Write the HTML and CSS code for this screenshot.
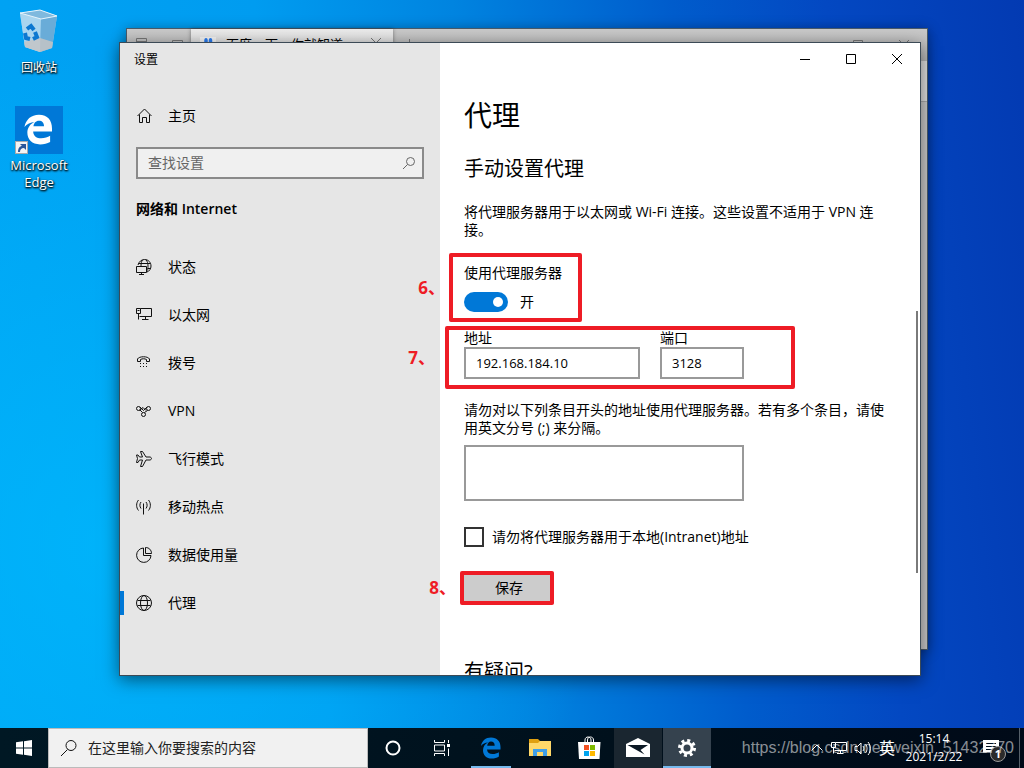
FILE: index.html
```html
<!DOCTYPE html>
<html lang="zh-CN">
<head>
    <meta charset="UTF-8">
    <meta name="viewport" content="width=device-width, initial-scale=1.0">
    <title>设置 - 代理</title>
    <link rel="stylesheet" href="styles.css">
</head>
<body>
    <div class="desktop">
        <!-- Desktop shortcuts -->
        <div class="shortcuts">
            <a class="shortcut" href="#">
                <svg width="48" height="48" viewBox="0 0 48 48">
                    <path d="M5 5 L25 2 L42 8 L37 40 L25 44 L10 39 Z" fill="#8cc9ee"/>
                    <path d="M5 5 L26 11 L25 44 L10 39 Z" fill="#a9d5ef"/>
                    <path d="M26 11 L42 8 L37 40 L25 44 Z" fill="#69acd8"/>
                    <path d="M9 34 L25 30 L38 34 L37 40 L25 44 L10 39 Z" fill="#c4c4c6" opacity=".85"/>
                    <path d="M5 5 L25 2 L42 8 L26 11 Z" fill="#7fb9de" stroke="#e6f4fc" stroke-width="1"/>
                    <path d="M12 21 l4 -3 3 4 M20 24 l2 5 -4 2 M15 31 l-4 -1 -1 -5" fill="none" stroke="#0c78d0" stroke-width="4"/>
                </svg>
                <span>回收站</span>
            </a>
            <a class="shortcut edge" href="#">
                <svg width="48" height="48" viewBox="0 0 48 48">
                    <rect width="48" height="48" fill="#0078d7"/>
                    <path transform="translate(8 8) scale(1.450)" d="M1 9 C2 4 5.500 .6 11 .6 C17 .6 20 4.500 20 10 V12 H7 C7.200 15.200 9.500 16.700 12.500 16.700 C15 16.700 17 16 18.700 15 V19.300 C16.700 20.400 14.500 21 11.800 21 C6.200 21 3 17.500 3 13 C3 9.500 5 6.700 8 5.500 C5.200 5.700 2.600 6.800 1 9 Z M7.200 8.500 H14.500 C14.500 6 13.200 4.600 11 4.600 C8.800 4.600 7.500 6.200 7.200 8.500 Z" fill="#fff" fill-rule="evenodd"/>
                    <rect x="0.500" y="35.500" width="12" height="12" fill="#f4f4f4" stroke="#aaa"/>
                    <path d="M3 46 C3 42 5 40 7 40 L5 38 H11 V44 L9 42 C6 42 5 44 5 46 Z" fill="#2b579a"/>
                </svg>
                <span>Microsoft Edge</span>
            </a>
        </div>

        <!-- Browser window behind -->
        <div class="browser">
            <div class="browser-tabs">
                <div class="browser-tools">
                    <svg width="14" height="14" viewBox="0 0 14 14"><path d="M1.500 2.500 h10 v10 h-10 Z M1.500 5.500 h10 M3 7.500 h7" /></svg>
                    <svg width="14" height="14" viewBox="0 0 14 14"><path d="M1.500 4.500 h10 v9 h-10 Z" /></svg>
                </div>
                <div class="browser-tab">
                    <svg width="16" height="16" viewBox="0 0 16 16"><rect width="16" height="16" fill="#f4f4f4"/><g fill="#2a7cf0"><ellipse cx="6" cy="4" rx="1.800" ry="3"/><ellipse cx="10.500" cy="4" rx="1.800" ry="3"/><ellipse cx="2.500" cy="7.500" rx="1.600" ry="2.300"/><ellipse cx="13.500" cy="7.500" rx="1.600" ry="2.300"/><path d="M8 7 L13 13 H3 Z"/></g></svg>
                    <span>百度一下，你就知道</span>
                    <svg width="12" height="12" viewBox="0 0 12 12"><path d="M1 1 L11 11 M11 1 L1 11" fill="none" stroke="#555"/></svg>
                </div>
                <svg class="browser-add" width="12" height="12" viewBox="0 0 12 12"><path d="M6.500 1 V12 M1 6.500 H12"/></svg>
                <div class="browser-controls">
                    <svg width="10" height="10" viewBox="0 0 10 10"><path d="M.5 .5 h9 v9 h-9 Z"/></svg>
                    <svg width="10" height="10" viewBox="0 0 10 10"><path d="M0 0 L10 10 M10 0 L0 10"/></svg>
                </div>
            </div>
            <div class="browser-bar"></div>
        </div>

        <!-- Settings window -->
        <div class="settings">
            <aside class="sidebar">
                <div class="window-title">设置</div>
                <a class="nav-item home" href="#">
                    <svg width="16" height="16" viewBox="0 0 16 16"><path d="M1.500 8 L8.500 1 L15.500 8 M3.500 6.500 V14.500 H6.500 V9.500 H10.500 V14.500 H13.500 V6.500"/></svg>
                    <span>主页</span>
                </a>
                <div class="search">
                    <input type="text" placeholder="查找设置" aria-label="查找设置">
                    <svg width="14" height="14" viewBox="0 0 14 14"><circle cx="8.500" cy="5.500" r="4"/><path d="M5.500 8.500 L1 13"/></svg>
                </div>
                <h3>网络和 Internet</h3>
                <nav>
                    <a class="nav-item" href="#">
                        <svg width="16" height="16" viewBox="0 0 16 16"><path d="M2 6 C3 2.500 5.500 .5 8.500 .5 C12.500 .5 15 3.500 15 7 C15 10 13.500 12 11 13 M6.500 1 C5.500 2.500 5 4 5 7 M10 1 C11.500 2.500 12 4.500 12 7 C12 9 11.800 10.500 11.500 11.500 M2.500 4.500 H14.500 M11.500 9.500 H14.500 M.5 7.500 H10.500 V13.500 H.5 Z M5.500 13.500 V15.500 M3 15.500 H8"/></svg>
                        <span>状态</span>
                    </a>
                    <a class="nav-item" href="#">
                        <svg width="16" height="16" viewBox="0 0 16 16"><path d="M4.500 1.500 H15.500 V9.500 H3.500 M9.500 9.500 V12.500 M6 12.500 H12.500 M.5 1.500 H4.500 V6.500 H.5 Z M2.500 6.500 V12.500 M1.500 3.500 H3.500"/></svg>
                        <span>以太网</span>
                    </a>
                    <a class="nav-item" href="#">
                        <svg width="16" height="16" viewBox="0 0 16 16"><path d="M1.500 6.500 V4 C3 1 12 1 13.500 4 V6.500 H10.500 V4.500 C8.500 3.500 6.500 3.500 4.500 4.500 V6.500 Z"/><path d="M4 8.500 h7 M4 11.500 h7" stroke-dasharray="1 2"/></svg>
                        <span>拨号</span>
                    </a>
                    <a class="nav-item" href="#">
                        <svg width="16" height="16" viewBox="0 0 16 16"><circle cx="2.500" cy="5.500" r="2"/><circle cx="12.500" cy="5.500" r="2"/><circle cx="7.500" cy="11.500" r="2"/><path d="M4 4 L7.500 7.500 L11 4 M3.500 7.500 L7 4.500 L10 7.500 M11.500 7.500 L8.500 9.500 M6.500 9.500 L4 7"/></svg>
                        <span>VPN</span>
                    </a>
                    <a class="nav-item" href="#">
                        <svg width="16" height="16" viewBox="0 0 16 16"><path d="M4.500 .5 H6.500 L10 6 H14 C16 6.500 16 8.500 14 9 H10 L6.500 15.500 H4.500 L6.500 9 H3.500 L2 11.500 H.5 L1.500 7.500 L.5 4 H2 L3.500 6 H6.500 Z"/></svg>
                        <span>飞行模式</span>
                    </a>
                    <a class="nav-item" href="#">
                        <svg width="16" height="16" viewBox="0 0 16 16"><path d="M7.500 4.500 V15.500 M5 3 C3.500 5 3.500 7.500 5 9.500 M10 3 C11.500 5 11.500 7.500 10 9.500 M2.500 1 C0 4 0 8.500 2.500 11.500 M12.500 1 C15 4 15 8.500 12.500 11.500"/></svg>
                        <span>移动热点</span>
                    </a>
                    <a class="nav-item" href="#">
                        <svg width="16" height="16" viewBox="0 0 16 16"><path d="M7.500 1 A7.200 7.200 0 1 0 15 8.500 H7.500 Z M9.500 .5 C13 .5 15.500 3 15.500 6.500 H9.500 Z"/></svg>
                        <span>数据使用量</span>
                    </a>
                    <a class="nav-item active" href="#">
                        <svg width="16" height="16" viewBox="0 0 16 16"><circle cx="8" cy="8" r="7.500"/><ellipse cx="8" cy="8" rx="3.500" ry="7.500"/><path d="M1.500 5.500 H14.500 M1.500 10.500 H14.500"/></svg>
                        <span>代理</span>
                    </a>
                </nav>
            </aside>

            <main class="content">
                <div class="window-controls">
                    <button aria-label="最小化"><svg width="10" height="10" viewBox="0 0 10 10"><path d="M0 5.500 H10"/></svg></button>
                    <button aria-label="最大化"><svg width="10" height="10" viewBox="0 0 10 10"><path d="M.5 .5 H9.500 V9.500 H.5 Z"/></svg></button>
                    <button aria-label="关闭"><svg width="10" height="10" viewBox="0 0 10 10"><path d="M0 0 L10 10 M10 0 L0 10"/></svg></button>
                </div>
                <div class="page">
                    <h1>代理</h1>
                    <h2>手动设置代理</h2>
                    <p class="intro">将代理服务器用于以太网或 Wi-Fi 连接。这些设置不适用于 VPN 连接。</p>

                    <div class="group toggle-group">
                        <label for="useProxy">使用代理服务器</label>
                        <div class="toggle-row">
                            <input type="checkbox" id="useProxy" class="toggle" checked>
                            <span>开</span>
                        </div>
                        <div class="mark mark-toggle"><span>6、</span></div>
                    </div>

                    <div class="group address-group">
                        <div class="field address">
                            <label for="address">地址</label>
                            <input type="text" id="address" value="192.168.184.10">
                        </div>
                        <div class="field port">
                            <label for="port">端口</label>
                            <input type="text" id="port" value="3128">
                        </div>
                        <div class="mark mark-address"><span>7、</span></div>
                    </div>

                    <label class="bypass-label" for="bypass">请勿对以下列条目开头的地址使用代理服务器。若有多个条目，请使用英文分号 (;) 来分隔。</label>
                    <textarea id="bypass"></textarea>

                    <div class="check-row">
                        <input type="checkbox" id="local">
                        <label for="local">请勿将代理服务器用于本地(Intranet)地址</label>
                    </div>

                    <div class="group save-group">
                        <button class="save">保存</button>
                        <div class="mark mark-save"><span>8、</span></div>
                    </div>

                    <h2 class="help">有疑问?</h2>
                </div>
                <div class="scrollbar"></div>
            </main>
        </div>
    </div>

    <!-- Taskbar -->
    <footer class="taskbar">
        <button class="start" aria-label="开始">
            <svg width="16" height="16" viewBox="0 0 16 16"><path d="M0 2.300 L7 1.300 V7.500 H0 Z M8 1.200 L16 0 V7.500 H8 Z M0 8.500 H7 V14.700 L0 13.700 Z M8 8.500 H16 V16 L8 14.800 Z" fill="#fff"/></svg>
        </button>
        <div class="task-search">
            <svg width="18" height="18" viewBox="0 0 18 18"><circle cx="11" cy="6.500" r="5"/><path d="M7.500 10.500 L1 17"/></svg>
            <input type="text" placeholder="在这里输入你要搜索的内容" aria-label="搜索">
        </div>
        <div class="tasks">
            <button class="task" aria-label="Cortana">
                <svg width="16" height="16" viewBox="0 0 16 16"><circle cx="8" cy="8" r="6.500" fill="none" stroke="#fff" stroke-width="2"/></svg>
            </button>
            <button class="task" aria-label="任务视图">
                <svg width="16" height="16" viewBox="0 0 16 16"><path d="M.5 0 V2.500 H10.500 V0 M.5 16 V13.500 H10.500 V16 M.5 5 H10.500 V11 H.5 Z M14.500 0 V3 M14.500 8.500 V16" fill="none" stroke="#fff"/><rect x="13" y="4" width="3" height="3" fill="#fff"/></svg>
            </button>
            <button class="task open" aria-label="Edge">
                <svg width="22" height="22" viewBox="0 0 22 22"><path d="M1 9 C2 4 5.500 .6 11 .6 C17 .6 20.500 4.500 20.500 10 V12.500 H7 C7.200 15.500 9.500 17 12.500 17 C15 17 17 16.400 18.900 15.200 V19.500 C16.700 21 14.500 21.600 11.800 21.600 C6.200 21.600 3 18 3 13.300 C3 9.500 5 6.700 8 5.500 C5.200 5.700 2.600 6.800 1 9 Z M7.200 8.800 H14.700 C14.700 6 13.200 4.600 11 4.600 C8.800 4.600 7.500 6.200 7.200 8.800 Z" fill="#0078d7" fill-rule="evenodd"/></svg>
            </button>
            <button class="task" aria-label="文件资源管理器">
                <svg width="22" height="20" viewBox="0 0 22 20"><path d="M0 1 H9 L11 3 H21 V18 H0 Z" fill="#e0a010"/><path d="M0 5 H9 L11 3 H22 V18 H0 Z" fill="#ffd869"/><path d="M4 18 V11 H18 V18 H14 V14 H8 V18 Z" fill="#3f9fe8"/></svg>
            </button>
            <button class="task" aria-label="应用商店">
                <svg width="24" height="24" viewBox="0 0 24 24"><path d="M8 7 V4 C8 0 14 0 14 4 V7 M10.500 7 V4 C10.500 0 16.500 0 16.500 4 V7" fill="none" stroke="#fff"/><path d="M1 6 H23.500 L22.500 23 H2 Z" fill="#fff"/><path d="M7 9 h5 v5 h-5 Z" fill="#f25022"/><path d="M13 9 h5 v5 h-5 Z" fill="#7fba00"/><path d="M7 15 h5 v5 h-5 Z" fill="#00a4ef"/><path d="M13 15 h5 v5 h-5 Z" fill="#ffb900"/></svg>
            </button>
            <button class="task hover" aria-label="邮件">
                <svg width="24" height="20" viewBox="0 0 24 20"><path d="M0 6 L12 0 L24 6 V19 H0 Z" fill="#fff"/><path d="M1.500 7 H22 L14.500 12 L18.500 16.500 Z" fill="#0b1824"/></svg>
            </button>
            <button class="task open current" aria-label="设置">
                <svg width="20" height="20" viewBox="0 0 20 20"><circle cx="10" cy="10" r="5" fill="none" stroke="#fff" stroke-width="3"/><circle cx="10" cy="10" r="7.500" fill="none" stroke="#fff" stroke-width="3" stroke-dasharray="3 2.890"/></svg>
            </button>
        </div>
        <div class="tray">
            <svg width="14" height="16" viewBox="0 0 14 16"><path d="M1.500 10.500 L7 5 L12.500 10.500"/></svg>
            <svg width="16" height="16" viewBox="0 0 16 16"><path d="M4.500 2.500 H15.500 V10.500 H3.500 M9.500 10.500 V13.500 M6 13.500 H12.500 M.5 2.500 H4.500 V7.500 H.5 Z M2.500 7.500 V13.500 M2.500 4.500 H3.500"/></svg>
            <svg width="18" height="16" viewBox="0 0 18 16"><path d="M1 6.500 H3.500 L7 3 V14 L3.500 10.500 H1 Z M9 6 C10 7.500 10 9.500 9 11 M11.500 4 C13.500 6.500 13.500 10.500 11.500 13 M14 2 C17 5.500 17 11.500 14 15"/></svg>
            <span class="ime">英</span>
            <div class="clock">
                <span>15:14</span>
                <span>2021/2/22</span>
            </div>
            <div class="notice">
                <svg width="16" height="16" viewBox="0 0 16 16"><path class="bubble" d="M0 0 H16 V12 H11 V15 L8 12 H0 Z"/><path d="M3 3.500 H13 M3 6.500 H13 M3 9.500 H10" stroke="#001020"/></svg>
                <span class="badge">1</span>
            </div>
            <div class="show-desktop"></div>
        </div>
        <div class="watermark">https://blog.csdn.net/weixin_51432770</div>
    </footer>
</body>
</html>
```

FILE: styles.css
```css
* {
    box-sizing: border-box;
}
body {
    margin: 0;
    height: 100vh;
    display: flex;
    flex-direction: column;
    overflow: hidden;
    font-family: 'Open Sans', 'Noto Sans CJK SC', sans-serif;
    font-size: 14px;
    line-height: 18px;
    color: #000;
}
button, input, textarea {
    font: inherit;
    color: inherit;
}
a {
    color: inherit;
    text-decoration: none;
}
h1, h2, h3, p {
    margin: 0;
    font-weight: normal;
}
svg {
    display: block;
    flex: none;
}

/* Desktop */
.desktop {
    position: relative;
    flex: 1;
    min-height: 0;
    overflow: hidden;
    background:
        radial-gradient(ellipse 500px 500px at 10% 75%, rgba(0, 190, 255, 0.6), rgba(0, 190, 255, 0)),
        linear-gradient(84deg, #00a4f4 0%, #009cf0 30%, #0084e0 48%, #005ccc 68%, #0348c2 82%, #033ab2 100%);
}
.shortcuts {
    display: flex;
    flex-direction: column;
    gap: 30px;
    width: 78px;
    padding-top: 8px;
}
.shortcut {
    display: flex;
    flex-direction: column;
    align-items: center;
    gap: 3px;
    font-size: 12px;
    line-height: 17px;
    color: #fff;
    text-align: center;
    text-shadow: 1px 1px 2px #000, 0 1px 2px #000;
}
.edge {
    font-size: 13px;
}

/* Browser window */
.browser {
    position: absolute;
    top: 28px;
    left: 126px;
    right: 96px;
    bottom: 78px;
    border: 1px solid #4a5a68;
    background: #c8c8c8;
    box-shadow: 0 2px 12px rgba(0, 0, 0, 0.4);
}
.browser-tabs {
    display: flex;
    height: 32px;
    background: linear-gradient(#cacaca, #b4b4b4);
}
.browser-tabs path {
    fill: none;
    stroke: #777;
}
.browser-tools {
    display: flex;
    gap: 22px;
    width: 64px;
    padding: 7px 8px;
}
.browser-tab {
    display: flex;
    gap: 10px;
    width: 202px;
    padding: 8px 11px 0 9px;
    background: linear-gradient(#ececec, #d0d0d0);
    font-size: 13px;
    line-height: 14px;
    box-shadow: 0 0 4px rgba(0, 0, 0, 0.4);
}
.browser-tab span {
    flex: 1;
    white-space: nowrap;
}
.browser-tab g path {
    fill: #2a7cf0;
    stroke: none;
}
.browser-add {
    margin: 9px 10px;
}
.browser-controls {
    display: flex;
    gap: 36px;
    margin-left: auto;
    padding: 11px 18px;
}
.browser-bar {
    height: 41px;
    background: #dedede;
    border-bottom: 1px solid #aaa;
}

/* Settings window */
.settings {
    position: absolute;
    top: 42px;
    left: 119px;
    right: 103px;
    bottom: 52px;
    display: flex;
    border: 1px solid #3c4a56;
    box-shadow: 0 4px 16px rgba(0, 0, 0, 0.5);
    overflow: hidden;
}
.sidebar {
    width: 320px;
    background: #e6e6e6;
}
.window-title {
    padding: 8px 14px 6px;
    font-size: 12px;
}
.nav-item {
    position: relative;
    display: flex;
    align-items: center;
    gap: 16px;
    height: 48px;
    padding: 0 16px;
}
.nav-item svg, .search svg, .task-search svg {
    fill: none;
    stroke: #111;
}
.home {
    margin-top: 17px;
}
.active::before {
    content: "";
    position: absolute;
    left: 0;
    width: 4px;
    height: 24px;
    background: #0078d7;
}
.search {
    display: flex;
    align-items: center;
    height: 32px;
    margin: 7px 16px 0;
    padding: 0 6px 0 10px;
    border: 2px solid #8a8a8a;
    background: #f0f0f0;
}
.search input {
    flex: 1;
    min-width: 0;
    padding: 0;
    border: 0;
    background: none;
}
.search input::placeholder {
    color: #666;
}
.search svg {
    stroke: #666;
}
.sidebar h3 {
    padding: 21px 16px 25px;
    font-size: 14px;
    font-weight: 600;
}

/* Settings page */
.content {
    position: relative;
    flex: 1;
    min-width: 0;
    background: #fff;
}
.window-controls {
    display: flex;
    justify-content: flex-end;
}
.window-controls button {
    display: flex;
    align-items: center;
    justify-content: center;
    width: 46px;
    height: 32px;
    border: 0;
    padding: 0;
    background: none;
}
.window-controls svg {
    fill: none;
    stroke: #000;
}
.page {
    padding: 22px 32px 0 24px;
}
h1 {
    font-size: 28px;
    line-height: 36px;
}
h2 {
    margin-top: 23px;
    font-size: 20px;
    line-height: 26px;
}
.intro {
    margin-top: 21px;
}
.group {
    position: relative;
    width: fit-content;
}
.toggle-group {
    margin-top: 24px;
}
.toggle-group label {
    display: block;
    line-height: 20px;
}
.toggle-row {
    display: flex;
    align-items: center;
    gap: 12px;
    margin-top: 9px;
    line-height: 20px;
}
.toggle {
    appearance: none;
    display: flex;
    align-items: center;
    justify-content: flex-end;
    width: 44px;
    height: 20px;
    margin: 0;
    padding: 5px;
    border-radius: 10px;
    background: #0078d7;
}
.toggle::before {
    content: "";
    width: 10px;
    height: 10px;
    border-radius: 50%;
    background: #fff;
}
.address-group {
    display: flex;
    gap: 20px;
    margin-top: 17px;
}
.field {
    display: flex;
    flex-direction: column;
}
.field input {
    width: 100%;
    height: 32px;
    padding: 0 10px;
    border: 2px solid #999;
    font-size: 13px;
}
.address {
    width: 176px;
}
.port {
    width: 84px;
}
.bypass-label {
    display: block;
    margin-top: 22px;
}
textarea {
    display: block;
    width: 280px;
    height: 56px;
    margin-top: 8px;
    border: 2px solid #999;
    resize: none;
}
.check-row {
    display: flex;
    align-items: center;
    gap: 8px;
    margin-top: 26px;
}
.check-row input {
    appearance: none;
    width: 20px;
    height: 20px;
    margin: 0;
    border: 2px solid #333;
}
.save-group {
    margin-top: 25px;
}
.save {
    display: block;
    width: 90px;
    height: 32px;
    padding: 0;
    border: 0;
    background: #ccc;
}
.help {
    margin-top: 55px;
}
.scrollbar {
    position: absolute;
    top: 268px;
    right: 2px;
    width: 2px;
    height: 262px;
    background: #7a7a7a;
}

/* Red step marks */
.mark {
    position: absolute;
    border: 4px solid #ee1c25;
    border-radius: 2px;
    pointer-events: none;
}
.mark span {
    position: absolute;
    right: 100%;
    top: 50%;
    margin-top: -9px;
    font-size: 17px;
    font-weight: bold;
    line-height: 18px;
    color: #ee1c25;
    white-space: nowrap;
}
.mark-toggle {
    inset: -10px -20px -10px -15px;
}
.mark-toggle span {
    padding-right: 8px;
}
.mark-address {
    inset: -3px -51px -10px -19px;
}
.mark-address span {
    padding-right: 14px;
}
.mark-save {
    inset: -1px 0 -1px -4px;
}
.mark-save span {
    padding-right: 8px;
}

/* Taskbar */
.taskbar {
    position: relative;
    display: flex;
    height: 40px;
    background: linear-gradient(90deg, #001824, #00101c 60%, #000a18);
    color: #fff;
}
.start {
    width: 48px;
    border: 0;
    padding: 0 16px;
    background: none;
}
.task-search {
    display: flex;
    align-items: center;
    gap: 10px;
    width: 320px;
    padding: 0 11px;
    border: 1px solid #bbb;
    background: #f1f1f1;
    color: #222;
}
.task-search input {
    flex: 1;
    min-width: 0;
    padding: 0;
    border: 0;
    background: none;
}
.task-search input::placeholder {
    color: #222;
}
.tasks {
    display: flex;
    gap: 1px;
    margin-left: 1px;
}
.task {
    display: flex;
    align-items: center;
    justify-content: center;
    position: relative;
    width: 48px;
    border: 0;
    padding: 0;
    background: none;
}
.open::after {
    content: "";
    position: absolute;
    left: 4px;
    right: 4px;
    bottom: 0;
    height: 2px;
    background: #76b9ed;
}
.hover {
    background: #1a2630;
}
.current {
    background: #35424e;
}
.current::after {
    left: 0;
    right: 0;
}
.tray {
    display: flex;
    align-items: center;
    margin-left: auto;
    gap: 7px;
}
.tray svg {
    fill: none;
    stroke: #fff;
}
.tray .bubble {
    fill: #fff;
}
.ime {
    font-size: 16px;
}
.clock {
    display: flex;
    flex-direction: column;
    align-items: center;
    width: 64px;
    font-size: 12px;
}
.notice {
    position: relative;
    margin-left: 10px;
}
.badge {
    position: absolute;
    left: 7px;
    top: 6px;
    width: 16px;
    height: 16px;
    border: 1px solid #999;
    border-radius: 50%;
    background: #2b2b2b;
    font-size: 11px;
    font-weight: bold;
    line-height: 14px;
    text-align: center;
}
.show-desktop {
    width: 5px;
    height: 40px;
    margin-left: 13px;
    border-left: 1px solid #56606a;
}
.watermark {
    position: absolute;
    right: 10px;
    top: 11px;
    font-family: 'Liberation Sans', Arial, sans-serif;
    font-size: 16px;
    color: rgba(255, 255, 255, 0.55);
    pointer-events: none;
}
```
